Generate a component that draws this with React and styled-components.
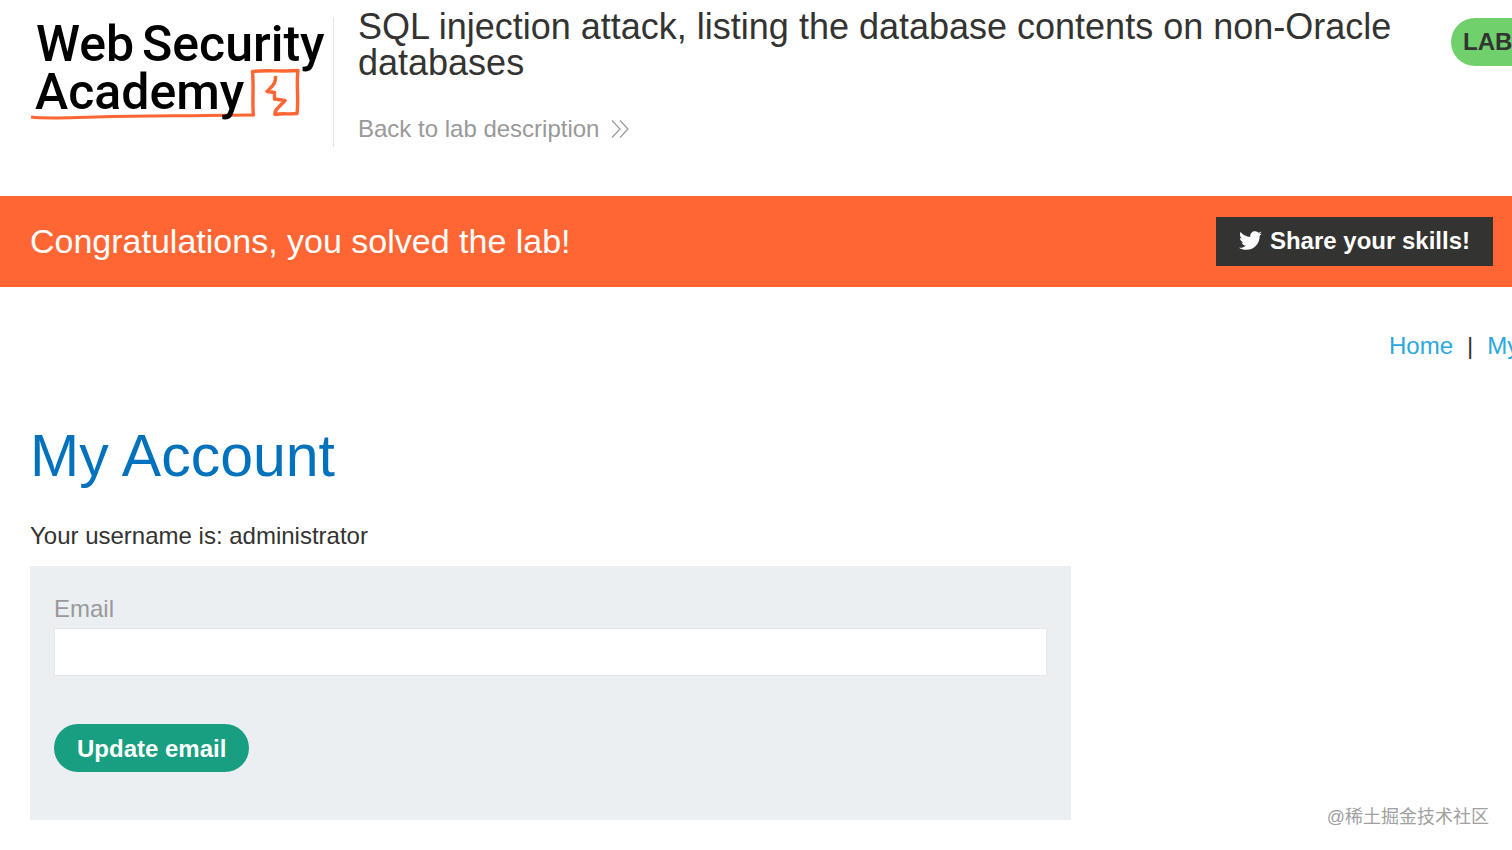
import React from "react";
import styled, { createGlobalStyle } from "styled-components";
import { FaTwitter } from "react-icons/fa";

const GlobalStyle = createGlobalStyle`
  *, *::before, *::after { box-sizing: border-box; }
  body {
    margin: 0;
    background: #fff;
    color: #333332;
    font-family: "Liberation Sans", Arial, sans-serif;
    font-size: 24px;
    line-height: 28px;
  }
`;

const Page = styled.div`
  position: relative;
  min-height: 100vh;
  overflow: hidden;
`;

const Header = styled.header`
  display: flex;
  align-items: flex-start;
  padding-left: 30px;
  height: 196px;
`;

const Brand = styled.a`
  flex: none;
  height: 130px;
  margin-top: 17px;
  padding-right: 5px;
  border-right: 1px solid #e4e4e4;
  svg { display: block; overflow: visible; }
`;

const LogoText = styled.text`
  font-family: Roboto, sans-serif;
  font-size: 50px;
  font-weight: 500;
  fill: #000;
`;

const Heading = styled.div`
  flex: 1;
  min-width: 0;
  padding: 9px 48px 0 24px;
`;

const LabTitle = styled.h2`
  margin: 0 0 34px;
  font-size: 36px;
  line-height: 36px;
  font-weight: 400;
`;

const BackLink = styled.a`
  display: inline-flex;
  align-items: center;
  gap: 12px;
  color: #999;
  text-decoration: none;
`;

const StatusSlot = styled.div`
  flex: 0 0 61px;
  min-width: 0;
  margin-top: 18px;
`;

const Status = styled.p`
  width: 196px;
  margin: 0;
  padding: 0 12px;
  border-radius: 24px;
  background: #70d16c;
  font-weight: 700;
  line-height: 48px;
`;

const Banner = styled.section`
  display: flex;
  align-items: center;
  justify-content: space-between;
  padding: 21px 19px 21px 30px;
  background: #ff6633;
  color: #fff;
`;

const BannerText = styled.h4`
  margin: 0;
  padding-bottom: 2px;
  font-size: 34px;
  line-height: 46px;
  font-weight: 400;
`;

const ShareButton = styled.button`
  display: flex;
  align-items: center;
  gap: 8px;
  height: 49px;
  padding: 0 23px 2px;
  border: 0;
  background: #333332;
  color: #fff;
  font: inherit;
  font-weight: 700;
`;

const Nav = styled.nav`
  display: flex;
  gap: 14px;
  width: 123px;
  margin: 45px 0 0 auto;
  white-space: nowrap;
`;

const NavLink = styled.a`
  color: #29a7df;
  text-decoration: none;
`;

const Account = styled.main`
  padding: 60px 30px 30px;
`;

const PageTitle = styled.h1`
  margin: 0 0 30px;
  color: #0071bc;
  font-size: 59px;
  line-height: 72px;
  font-weight: 400;
`;

const Username = styled.p`
  margin: 0 0 16px;
`;

const EmailForm = styled.form`
  max-width: 1041px;
  padding: 29px 24px 48px;
  background: #ebeff2;
`;

const Label = styled.label`
  display: block;
  margin-bottom: 5px;
  color: #999;
`;

const EmailInput = styled.input`
  display: block;
  width: 100%;
  height: 48px;
  margin-bottom: 48px;
  padding: 0 12px;
  border: 1px solid #e3e8eb;
  background: #fff;
  font: inherit;
`;

const SubmitButton = styled.button`
  display: block;
  height: 48px;
  padding: 2px 23px 0;
  border: 0;
  border-radius: 24px;
  background: #189e80;
  color: #fff;
  font: inherit;
  font-weight: 700;
`;

const Watermark = styled.div`
  position: absolute;
  right: 23px;
  bottom: 19px;
  color: #a0a0a0;
  font-family: "Liberation Sans", "Noto Sans CJK SC", sans-serif;
  font-size: 18px;
`;

function Logo() {
  return (
    <svg width="298" height="108" viewBox="30 17 298 108" role="img" aria-label="Web Security Academy">
      <path d="M31 117 C46 119,70 117.500,96 117 C145 115.500,178 116,205 115.500 L253 115" fill="none" stroke="#ff6633" strokeWidth="3" />
      <path d="M253.500 116.500 C252 103,254 88,252.500 71.500 C266 69.500,282 72,298 70.500 C296 83,299 99,297 113.500 C289 114.500,282 113,275 114.500 C274 110,280 106,285 100.500 L274.500 99 L274.500 92.500 L267 91.500 C272 86,276 84,275.500 76" fill="none" stroke="#ff6633" strokeWidth="3.400" strokeLinejoin="round" />
      <LogoText x="36" y="61">Web</LogoText>
      <LogoText x="142" y="61">Security</LogoText>
      <LogoText x="35" y="109">Academy</LogoText>
    </svg>
  );
}

export default function App() {
  return (
    <Page>
      <GlobalStyle />
      <Header>
        <Brand href="#"><Logo /></Brand>
        <Heading>
          <LabTitle>SQL injection attack, listing the database contents on non-Oracle databases</LabTitle>
          <BackLink href="#">
            Back to lab description
            <svg width="18" height="18" viewBox="0 0 18 18" fill="none" stroke="#999" strokeWidth="1.200" aria-hidden="true">
              <path d="M1 0.500 L9 9 L1 17.500 M9 0.500 L17 9 L9 17.500" />
            </svg>
          </BackLink>
        </Heading>
        <StatusSlot><Status>LAB</Status></StatusSlot>
      </Header>
      <Banner>
        <BannerText>Congratulations, you solved the lab!</BannerText>
        <ShareButton type="button"><FaTwitter size={23} aria-hidden="true" />Share your skills!</ShareButton>
      </Banner>
      <Nav>
        <NavLink href="#">Home</NavLink>
        <span>|</span>
        <NavLink href="#">My</NavLink>
      </Nav>
      <Account>
        <PageTitle>My Account</PageTitle>
        <Username>Your username is: administrator</Username>
        <EmailForm onSubmit={(event) => event.preventDefault()}>
          <Label htmlFor="email">Email</Label>
          <EmailInput id="email" type="email" name="email" />
          <SubmitButton type="submit">Update email</SubmitButton>
        </EmailForm>
      </Account>
      <Watermark>@稀土掘金技术社区</Watermark>
    </Page>
  );
}
